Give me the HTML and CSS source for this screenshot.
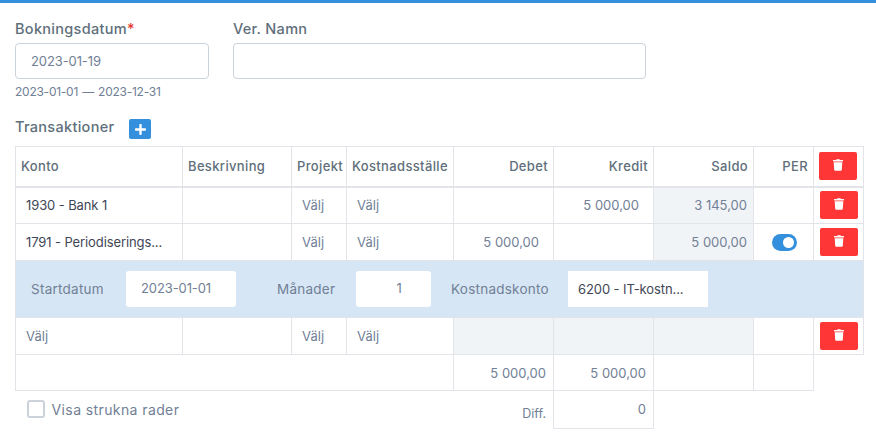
FILE: index.html
```html
<!DOCTYPE html>
<html lang="sv">
<head>
<meta charset="utf-8">
<title>Verifikation</title>
<link rel="stylesheet" href="styles.css">
</head>
<body>
<main class="page">
  <div class="form-row">
    <div class="field field-date">
      <label class="label">Bokningsdatum<span class="req">*</span></label>
      <div class="input">2023-01-19</div>
      <div class="hint">2023-01-01 — 2023-12-31</div>
    </div>
    <div class="field field-name">
      <label class="label">Ver. Namn</label>
      <div class="input"></div>
    </div>
  </div>
  <div class="section-head">
    <span class="section-title">Transaktioner</span>
    <button class="add-btn" type="button" aria-label="Lägg till">
      <svg class="plus" viewBox="0 0 448 512"><path d="M416 208H272V64c0-17.670-14.330-32-32-32h-32c-17.670 0-32 14.330-32 32v144H32c-17.670 0-32 14.330-32 32v32c0 17.670 14.330 32 32 32h144v144c0 17.670 14.330 32 32 32h32c17.670 0 32-14.330 32-32V304h144c17.670 0 32-14.330 32-32v-32c0-17.670-14.330-32-32-32z"/></svg>
    </button>
  </div>
  <table class="grid">
    <colgroup>
      <col class="c-konto"><col class="c-besk"><col class="c-proj"><col class="c-kst">
      <col class="c-num"><col class="c-num"><col class="c-num"><col class="c-per"><col class="c-del">
    </colgroup>
    <thead>
      <tr class="head-row">
        <th>Konto</th><th>Beskrivning</th><th>Projekt</th><th>Kostnadsställe</th>
        <th class="right">Debet</th><th class="right">Kredit</th><th class="right">Saldo</th><th class="right">PER</th>
        <th class="del-cell head-del"><button class="del-btn" type="button" aria-label="Ta bort"><svg class="trash" viewBox="0 0 448 512"><path d="M432 32H312l-9.400-18.700A24 24 0 0 0 281.100 0H166.800a23.720 23.720 0 0 0-21.400 13.300L136 32H16A16 16 0 0 0 0 48v32a16 16 0 0 0 16 16h416a16 16 0 0 0 16-16V48a16 16 0 0 0-16-16zM53.200 467a48 48 0 0 0 47.900 45h245.800a48 48 0 0 0 47.900-45L416 128H32z"/></svg></button></th>
      </tr>
    </thead>
    <tbody>
      <tr class="row">
        <td class="acc dark">1930 - Bank 1</td><td></td><td class="sel">Välj</td><td class="sel">Välj</td>
        <td class="num"></td><td class="num">5 000,00</td><td class="num shade">3 145,00</td><td></td>
        <td class="del-cell"><button class="del-btn" type="button" aria-label="Ta bort"><svg class="trash" viewBox="0 0 448 512"><path d="M432 32H312l-9.400-18.700A24 24 0 0 0 281.100 0H166.800a23.720 23.720 0 0 0-21.400 13.300L136 32H16A16 16 0 0 0 0 48v32a16 16 0 0 0 16 16h416a16 16 0 0 0 16-16V48a16 16 0 0 0-16-16zM53.200 467a48 48 0 0 0 47.900 45h245.800a48 48 0 0 0 47.900-45L416 128H32z"/></svg></button></td>
      </tr>
      <tr class="row">
        <td class="acc dark">1791 - Periodiserings...</td><td></td><td class="sel">Välj</td><td class="sel">Välj</td>
        <td class="num">5 000,00</td><td class="num"></td><td class="num shade">5 000,00</td>
        <td class="per-cell"><span class="toggle"><span class="knob"></span></span></td>
        <td class="del-cell"><button class="del-btn" type="button" aria-label="Ta bort"><svg class="trash" viewBox="0 0 448 512"><path d="M432 32H312l-9.400-18.700A24 24 0 0 0 281.100 0H166.800a23.720 23.720 0 0 0-21.400 13.300L136 32H16A16 16 0 0 0 0 48v32a16 16 0 0 0 16 16h416a16 16 0 0 0 16-16V48a16 16 0 0 0-16-16zM53.200 467a48 48 0 0 0 47.900 45h245.800a48 48 0 0 0 47.900-45L416 128H32z"/></svg></button></td>
      </tr>
      <tr class="period-row">
        <td colspan="9" class="period-cell">
          <div class="period">
            <span class="p-label p-start">Startdatum</span>
            <span class="p-input p-date">2023-01-01</span>
            <span class="p-label p-months">Månader</span>
            <span class="p-input p-count">1</span>
            <span class="p-label p-cost">Kostnadskonto</span>
            <span class="p-select">6200 - IT-kostn...</span>
          </div>
        </td>
      </tr>
      <tr class="row">
        <td class="acc">Välj</td><td></td><td class="sel">Välj</td><td class="sel">Välj</td>
        <td class="num shade"></td><td class="num shade"></td><td class="num shade"></td><td></td>
        <td class="del-cell"><button class="del-btn" type="button" aria-label="Ta bort"><svg class="trash" viewBox="0 0 448 512"><path d="M432 32H312l-9.400-18.700A24 24 0 0 0 281.100 0H166.800a23.720 23.720 0 0 0-21.400 13.300L136 32H16A16 16 0 0 0 0 48v32a16 16 0 0 0 16 16h416a16 16 0 0 0 16-16V48a16 16 0 0 0-16-16zM53.200 467a48 48 0 0 0 47.900 45h245.800a48 48 0 0 0 47.900-45L416 128H32z"/></svg></button></td>
      </tr>
      <tr class="total-row">
        <td colspan="4"></td><td class="tot">5 000,00</td><td class="tot">5 000,00</td><td></td><td></td><td class="none"></td>
      </tr>
      <tr class="diff-row">
        <td colspan="4" class="none check-cell"><label class="check"><span class="box"></span>Visa strukna rader</label></td>
        <td class="none diff-label">Diff.</td>
        <td class="diff-value">0</td>
        <td colspan="3" class="none"></td>
      </tr>
    </tbody>
  </table>
</main>
</body>
</html>
```
FILE: styles.css
```css
* { box-sizing: border-box; }
html, body { margin: 0; padding: 0; background: #fff; }
body {
  font-family: Inter, "Open Sans", "Liberation Sans", sans-serif;
  font-size: 13px;
  color: #718096;
  overflow: hidden;
}
.page {
  height: 446px;
  border-top: 3px solid #3490dc;
  padding: 17px 12px 0 15px;
}
.form-row { display: flex; gap: 24px; }
.field-date { width: 194px; }
.field-name { width: 413px; }
.label {
  display: block;
  font-size: 14.5px;
  letter-spacing: .3px;
  line-height: 18px;
  font-weight: 450;
  color: #606f7b;
  margin-bottom: 5px;
}
.req { color: #e3342f; }
.input {
  height: 36px;
  border: 1px solid #cbd2d9;
  border-radius: 4px;
  padding: 0 15px;
  line-height: 35px;
  letter-spacing: -.1px;
  color: #718096;
}
.hint { font-size: 12px; letter-spacing: -.25px; word-spacing: 1px; line-height: 16px; margin-top: 5px; color: #718096; }
.section-head { display: flex; align-items: flex-start; gap: 15px; margin-top: 18px; height: 22px; margin-bottom: 6px; }
.section-title { font-size: 14.5px; line-height: 18px; letter-spacing: .3px; font-weight: 450; color: #606f7b; }
.add-btn {
  width: 22px; height: 20px; padding: 0; border: 0; margin-top: 1px;
  background: #3490dc; border-radius: 2px;
  display: flex; align-items: center; justify-content: center;
}
.plus { width: 11px; height: 13px; fill: #fff; }
.grid {
  border-collapse: collapse;
  table-layout: fixed;
  width: 848px;
}
.c-konto { width: 167px; }
.c-besk { width: 109px; }
.c-proj { width: 55px; }
.c-kst { width: 107px; }
.c-num { width: 100px; }
.c-per { width: 60px; }
.c-del { width: 50px; }
th, td {
  border: 1px solid #e2e4ea;
  padding: 0;
  font-size: 13px;
  white-space: nowrap;
  overflow: hidden;
}
th {
  height: 40px;
  text-align: left;
  padding: 0 5px;
  font-weight: 450;
  letter-spacing: .35px;
  color: #606f7b;
  border-bottom-width: 2px;
}
th.right { text-align: right; }
.row td { height: 37px; }
.acc { padding-left: 10px; }
.dark { color: #3f4756; letter-spacing: -.1px; }
.sel { padding-left: 10px; }
.num { text-align: right; padding-right: 6px; }
.shade { background: #f1f4f7; }
td.num:not(.shade) { padding-right: 14px; }
.del-cell { text-align: center; padding: 0; }
th.del-cell { padding: 0 0 0 5px; text-align: left; border-bottom-width: 2px; }
.del-btn {
  width: 38px; height: 28px; padding: 0; border: 0;
  background: #ff3636; border-radius: 2px;
  display: inline-flex; align-items: flex-start; justify-content: center;
  vertical-align: middle;
  padding-top: 7px;
}
.trash { width: 10px; height: 12px; fill: #fff; }
.per-cell { padding-left: 18px; }
.toggle {
  display: flex; justify-content: flex-end; align-items: center;
  width: 25px; height: 17px; border-radius: 9px;
  background: #3490dc; padding-right: 3px;
}
.knob { width: 11px; height: 11px; border-radius: 50%; background: #fff; }
.period-cell { background: #d6e6f4; height: 57px; }
.period { display: flex; align-items: center; padding: 0; height: 56px; }
.p-label { color: #718096; font-size: 13.5px; letter-spacing: .25px; }
.p-start { margin-left: 15px; width: 95px; }
.p-input {
  background: #fff; height: 36px; border-radius: 3px; line-height: 35px; color: #718096; letter-spacing: -.1px;
}
.p-date { width: 110px; padding-left: 15px; }
.p-months { margin-left: 41px; width: 79px; }
.p-count { width: 75px; text-align: center; padding-left: 11px; }
.p-cost { margin-left: 20px; width: 117px; }
.p-select { background: #fff; width: 140px; height: 36px; line-height: 37px; padding-left: 10px; color: #3f4756; letter-spacing: -.1px; }
.total-row td { height: 36px; }
.tot { text-align: right; padding-right: 7px; }
.none { border: 0; }
.total-row .none { border-top: 0; border-bottom: 0; border-right: 0; }
.diff-row td { height: 38px; }
.diff-row .none { border-left: 0; border-right: 0; border-bottom: 0; }
.check-cell { vertical-align: top; padding: 9px 0 0 11px; }
.check { display: flex; align-items: center; gap: 7px; color: #718096; font-size: 14px; letter-spacing: .4px; }
.box { width: 18px; height: 18px; border: 2px solid #cbd2d9; border-radius: 3px; background: #fff; }
.diff-label { text-align: right; padding: 8px 7px 0 0; font-size: 12.5px; }
.diff-value { text-align: right; padding: 0 7px 2px 0; }
```
